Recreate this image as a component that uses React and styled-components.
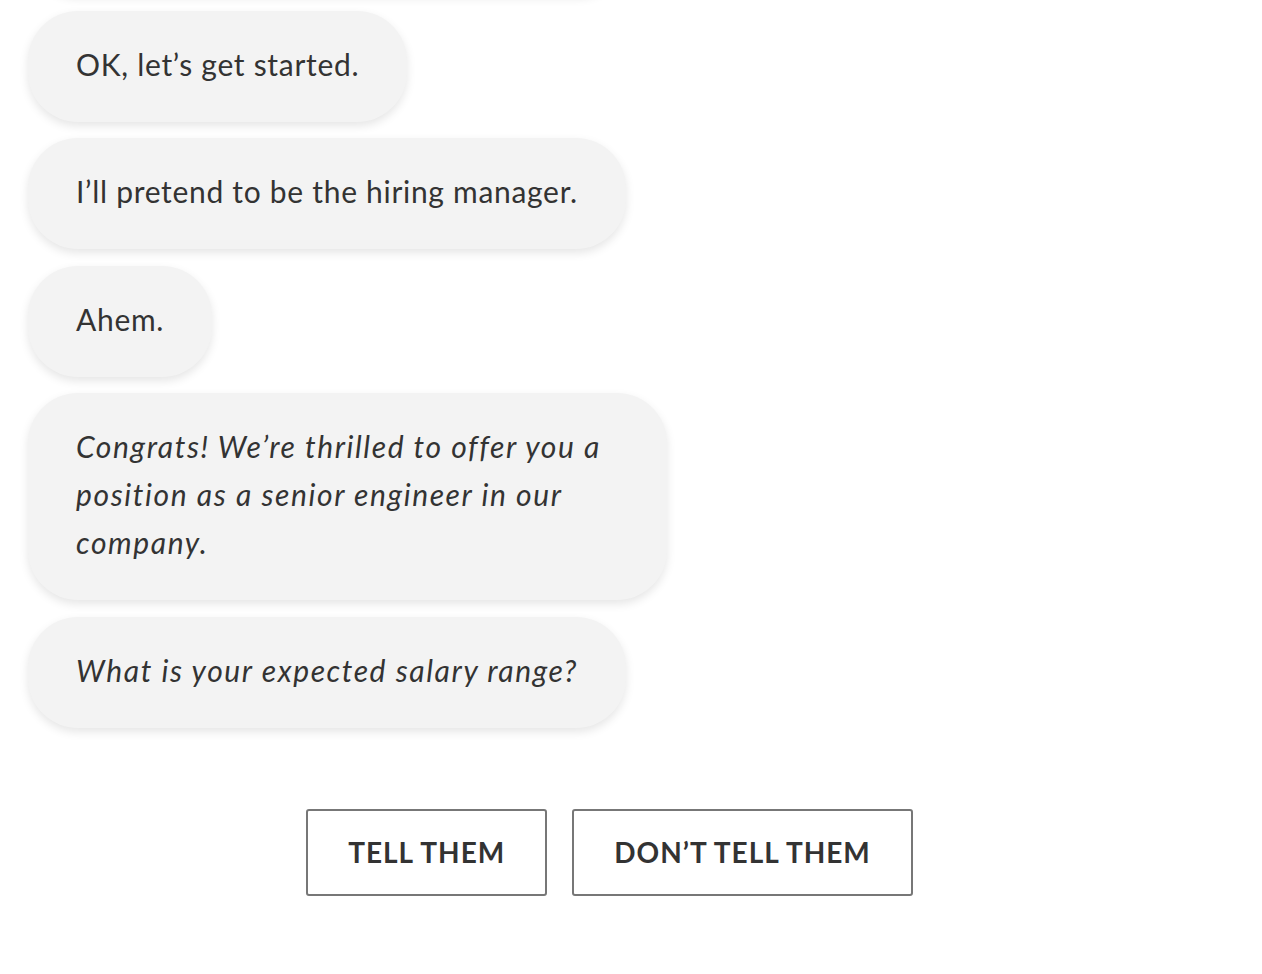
import styled, { createGlobalStyle } from "styled-components";

const GlobalStyle = createGlobalStyle`
	html, body {
		margin: 0;
		padding: 0;
		background: #ffffff;
		font-family: Lato, "Noto Sans", sans-serif;
		color: #333333;
	}
`;

const messages = [
	{ text: "Let’s practice negotiating a job offer.", italic: false },
	{ text: "OK, let’s get started.", italic: false },
	{ text: "I’ll pretend to be the hiring manager.", italic: false },
	{ text: "Ahem.", italic: false },
	{
		text: "Congrats! We’re thrilled to offer you a position as a senior engineer in our company.",
		italic: true,
	},
	{ text: "What is your expected salary range?", italic: true },
];

const App = () => {
	return (
		<>
			<GlobalStyle />
			<S.Page>
				<S.Thread>
					{messages.map((m, i) => (
						<S.Bubble key={i} $italic={m.italic}>
							{m.text}
						</S.Bubble>
					))}
				</S.Thread>
				<S.Actions>
					<S.Choice type="button">TELL THEM</S.Choice>
					<S.Choice type="button">DON’T TELL THEM</S.Choice>
				</S.Actions>
			</S.Page>
		</>
	);
};
export default App;

const Page = styled.main`
	width: 100%;
	min-height: 974px;
	padding: 0 71px 0 28px;
	box-sizing: border-box;
	overflow: hidden;
`;

// first bubble sits mostly above the fold, like a scrolled chat
const Thread = styled.div`
	margin-top: -117px;
	display: flex;
	flex-direction: column;
	align-items: flex-start;
	gap: 16.5px;
`;

const Bubble = styled.div`
	max-width: 543px;
	padding: 29px 48px 34px;
	background: #f3f3f3;
	border-radius: 50px;
	box-shadow: 0 4px 10px rgba(0, 0, 0, 0.1);
	font-size: 30px;
	line-height: 48px;
	white-space: ${(p) => (p.$italic ? "normal" : "nowrap")};
	letter-spacing: ${(p) => (p.$italic ? "1.6px" : "0.7px")};
	font-style: ${(p) => (p.$italic ? "italic" : "normal")};
`;

const Actions = styled.div`
	margin-top: 81px;
	display: flex;
	justify-content: center;
	gap: 25px;
`;

const Choice = styled.button`
	height: 87px;
	padding: 0 40px;
	background: #ffffff;
	border: 2px solid #777777;
	border-radius: 3px;
	font-family: Lato, "Noto Sans", sans-serif;
	font-size: 28px;
	font-weight: 700;
	letter-spacing: 1px;
	color: #333333;
	cursor: pointer;
`;

const S = {
	Page,
	Thread,
	Bubble,
	Actions,
	Choice,
};
